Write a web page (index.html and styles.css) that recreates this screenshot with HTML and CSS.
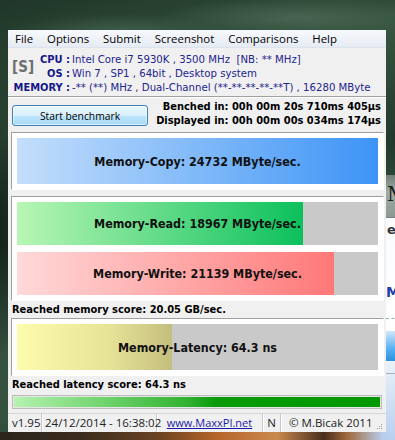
FILE: index.html
```html
<!DOCTYPE html>
<html>
<head>
<meta charset="utf-8">
<link rel="stylesheet" href="styles.css">
</head>
<body>
<div class="desktop">
  <div class="photo"></div>
  <div class="other">
    <div class="o-head"><span class="o-m">M</span></div>
    <div class="o-body">
      <span class="o-e">e</span>
      <span class="o-m2">M</span>
      <div class="o-dash"></div>
      <div class="o-bar"></div>
      <div class="o-line"></div>
    </div>
  </div>
  <div class="win">
    <div class="menubar">
      <span class="mi">File</span>
      <span class="mi">Options</span>
      <span class="mi">Submit</span>
      <span class="mi">Screenshot</span>
      <span class="mi">Comparisons</span>
      <span class="mi">Help</span>
    </div>
    <div class="info">
      <div class="sys">[S]</div>
      <div class="lbl">CPU :</div><div class="val">Intel Core i7 5930K , 3500 MHz&nbsp; [NB: ** MHz]</div>
      <div class="lbl">OS :</div><div class="val">Win 7 , SP1 , 64bit , Desktop system</div>
      <div class="lbl mem">MEMORY :</div><div class="val">-** (**) MHz , Dual-Channel (**-**-**-**-**T) , 16280 MByte</div>
    </div>
    <div class="bench">
      <button class="btn">Start benchmark</button>
      <div class="times">
        <div>Benched in: 00h 00m 20s 710ms 405µs</div>
        <div>Displayed in: 00h 00m 00s 034ms 174µs</div>
      </div>
    </div>
    <div class="panel">
      <div class="bar"><div class="fill copy" style="width:100%"></div><span class="txt">Memory-Copy: 24732 MByte/sec.</span></div>
    </div>
    <div class="panel rw">
      <div class="bar sm"><div class="fill read" style="width:79.2%"></div><span class="txt">Memory-Read: 18967 MByte/sec.</span></div>
      <div class="bar sm"><div class="fill write" style="width:87.8%"></div><span class="txt">Memory-Write: 21139 MByte/sec.</span></div>
    </div>
    <div class="score">Reached memory score: 20.05 GB/sec.</div>
    <div class="panel">
      <div class="bar"><div class="fill lat" style="width:43%"></div><span class="txt">Memory-Latency: 64.3 ns</span></div>
    </div>
    <div class="score">Reached latency score: 64.3 ns</div>
    <div class="progress"><div class="pfill"></div></div>
    <div class="status">
      <div class="sec s1">v1.95</div>
      <div class="sec s2">24/12/2014 - 16:38:02</div>
      <div class="sec s3"><span class="link">www.MaxxPI.net</span></div>
      <div class="sec s4">N</div>
      <div class="sec s5">© M.Bicak 2011</div>
      <svg class="grip" width="7" height="7" viewBox="0 0 7 7">
        <rect x="5" y="1" width="1" height="1" fill="#a0a0a0"/>
        <rect x="3" y="3" width="1" height="1" fill="#a0a0a0"/>
        <rect x="5" y="3" width="1" height="1" fill="#a0a0a0"/>
        <rect x="1" y="5" width="1" height="1" fill="#a0a0a0"/>
        <rect x="3" y="5" width="1" height="1" fill="#a0a0a0"/>
        <rect x="5" y="5" width="1" height="1" fill="#a0a0a0"/>
      </svg>
    </div>
  </div>
</div>
</body>
</html>
```
FILE: styles.css
```css
* { box-sizing: border-box; }
html, body { margin: 0; padding: 0; }
body {
  width: 395px;
  height: 440px;
  overflow: hidden;
  font-family: "DejaVu Sans Condensed", "DejaVu Sans", sans-serif;
  background:
    radial-gradient(ellipse 110px 22px at 30% 8%, rgba(95,125,108,.5), transparent),
    radial-gradient(ellipse 140px 20px at 75% 4%, rgba(100,132,114,.45), transparent),
    radial-gradient(ellipse 60px 200px at 0% 50%, rgba(10,22,15,.6), transparent),
    linear-gradient(165deg, #1f3628 0%, #36543f 25%, #223a2c 45%, #3f5e4a 65%, #213828 100%);
}
.desktop { position: relative; width: 395px; height: 440px; }

.photo {
  position: absolute; left: 0; top: 432px; width: 395px; height: 8px;
  background: linear-gradient(90deg, #2a261c 0%, #3b2c1e 20%, #6a4324 40%, #b6652a 55%, #c98a4e 70%, #4a2e1e 82%, #a06a3c 88%, #b8cff0 97%);
}

.other {
  position: absolute; left: 386px; top: 175px; width: 30px; height: 265px;
  background: linear-gradient(#f8fafd 0%, #ffffff 60%, #d9e6f6 80%, #b7cfee 100%);
  overflow: hidden;
}
.o-head {
  height: 43px;
  background: linear-gradient(#6f7d76, #9faba5 40%, #8c9891);
  border-bottom: 1px solid #7a7f85;
}
.o-m { display: block; font: 20px "DejaVu Serif", serif; color: #1b1b1b; padding-top: 7px; margin-left: 1px; }
.o-body { display: flex; flex-direction: column; }
.o-e { font: bold 13px "DejaVu Sans", sans-serif; color: #333; margin-top: 4px; margin-left: 1px; height: 16px; }
.o-m2 { font: bold 14px "DejaVu Sans", sans-serif; color: #2040a8; margin-top: 46px; margin-left: 0; height: 16px; }
.o-dash { border-top: 1px dashed #9aa; margin-top: 18px; }
.o-bar { height: 30px; margin-top: 12px; background: linear-gradient(#cfe8fc, #55b0f0 60%, #2a90e0); }
.o-line { border-top: 1px solid #a8b0bc; margin-top: 12px; }

.win {
  position: absolute; left: 8px; top: 30px; width: 378px; height: 402px;
  background: #f0f0f0;
  display: flex; flex-direction: column;
}

.menubar {
  height: 18px;
  display: flex; align-items: center;
  background: linear-gradient(#f7f9fc, #e6ebf3);
  border-bottom: 1px solid #dde3ec;
  font: 11.4px "Open Sans", sans-serif;
  color: #000;
}
.mi { padding: 0 7px; line-height: 18px; }

.info {
  height: 49px;
  padding: 5px 0 0 4px;
  display: grid;
  grid-template-columns: 22px 34px 1fr;
  grid-auto-rows: 14px;
  column-gap: 2px;
  font-size: 11px;
  line-height: 14px;
  border-bottom: 1px solid #a0a0a0;
  box-shadow: 0 1px 0 #ffffff;
}
.sys {
  grid-column: 1; grid-row: 1 / 3; align-self: center;
  font-size: 15px; font-weight: bold; color: #6e6e6e; line-height: 16px;
}
.lbl { grid-column: 2; text-align: right; font-weight: bold; color: #17178a; white-space: nowrap; }
.lbl.mem { grid-column: 1 / 3; }
.val { grid-column: 3; color: #24248e; white-space: nowrap; font-size: 11.3px; }

.bench {
  height: 35px;
  display: flex; justify-content: space-between; align-items: flex-start;
  padding: 0 5px 0 4px;
}
.btn {
  margin-top: 8px;
  width: 136px; height: 21px;
  border: 1px solid #3c7fb1;
  border-radius: 3px;
  background: linear-gradient(#eaf6fd 0%, #d9f0fc 50%, #bee6fd 51%, #a7d9f5 100%);
  box-shadow: inset 0 0 0 1px rgba(255,255,255,.6);
  font: 10.3px "Open Sans", sans-serif;
  color: #000;
  padding: 0;
}
.times {
  padding-top: 3px;
  text-align: right;
  font-size: 11px; font-weight: bold; line-height: 14px; color: #000;
  white-space: nowrap;
}

.panel {
  margin: 0 2px 0 3px;
  border-top: 1px solid #a0a0a0;
  border-left: 1px solid #a0a0a0;
  border-right: 1px solid #ffffff;
  border-bottom: 1px solid #ffffff;
  background: #ffffff;
  padding: 5px;
  display: flex; flex-direction: column; gap: 7px;
}
.panel.rw { margin-top: 6px; }
.bar {
  height: 46px;
  display: grid;
  background: #c9c9c9;
}
.bar.sm { height: 43px; }
.fill { grid-area: 1 / 1; height: 100%; }
.txt {
  grid-area: 1 / 1; place-self: center;
  font-size: 12.4px; font-weight: bold; color: #111;
  white-space: nowrap;
}
.copy { background: linear-gradient(90deg, #c4defb, #3d94f6); }
.read { background: linear-gradient(90deg, #b8f6b4, #0cc05c); }
.write { background: linear-gradient(90deg, #ffd9d9, #ff7878); }
.lat { background: linear-gradient(90deg, #fdfcad, #e6e296 60%, #c4be7e); }

.score {
  height: 17px;
  padding-left: 4px;
  font-size: 11px; font-weight: bold; line-height: 17px; color: #000;
}

.progress {
  margin: 2px 4px 0 4px;
  height: 14px;
  border: 1px solid #bcbcbc;
  background: #e6e6e6;
  padding: 1px;
}
.pfill {
  height: 100%;
  background: linear-gradient(90deg, #b5f2b1 0%, #6fd36c 25%, #2fb12f 48%, #0a9a0a 55%, #009900 100%);
}

.status {
  margin-top: auto;
  height: 19px;
  border-top: 1px solid #d5d5d5;
  display: flex; align-items: center;
  font: 11.5px "Open Sans", sans-serif;
  color: #222;
}
.sec {
  height: 100%;
  line-height: 18px;
  border-right: 1px solid #c7c7c7;
  box-shadow: 1px 0 0 #ffffff;
  white-space: nowrap;
}
.s1 { width: 34px; padding-left: 4px; }
.s2 { width: 115px; padding-left: 3px; }
.s3 { width: 106px; text-align: center; }
.s3 .link { font-size: 11px; }
.s4 { width: 18px; text-align: center; }
.s5 { flex: 1; padding-left: 8px; border-right: none; box-shadow: none; }
.link { color: #1a1aa6; text-decoration: underline; }
.grip { align-self: flex-end; margin: 0 3px 2px 0; }
```
